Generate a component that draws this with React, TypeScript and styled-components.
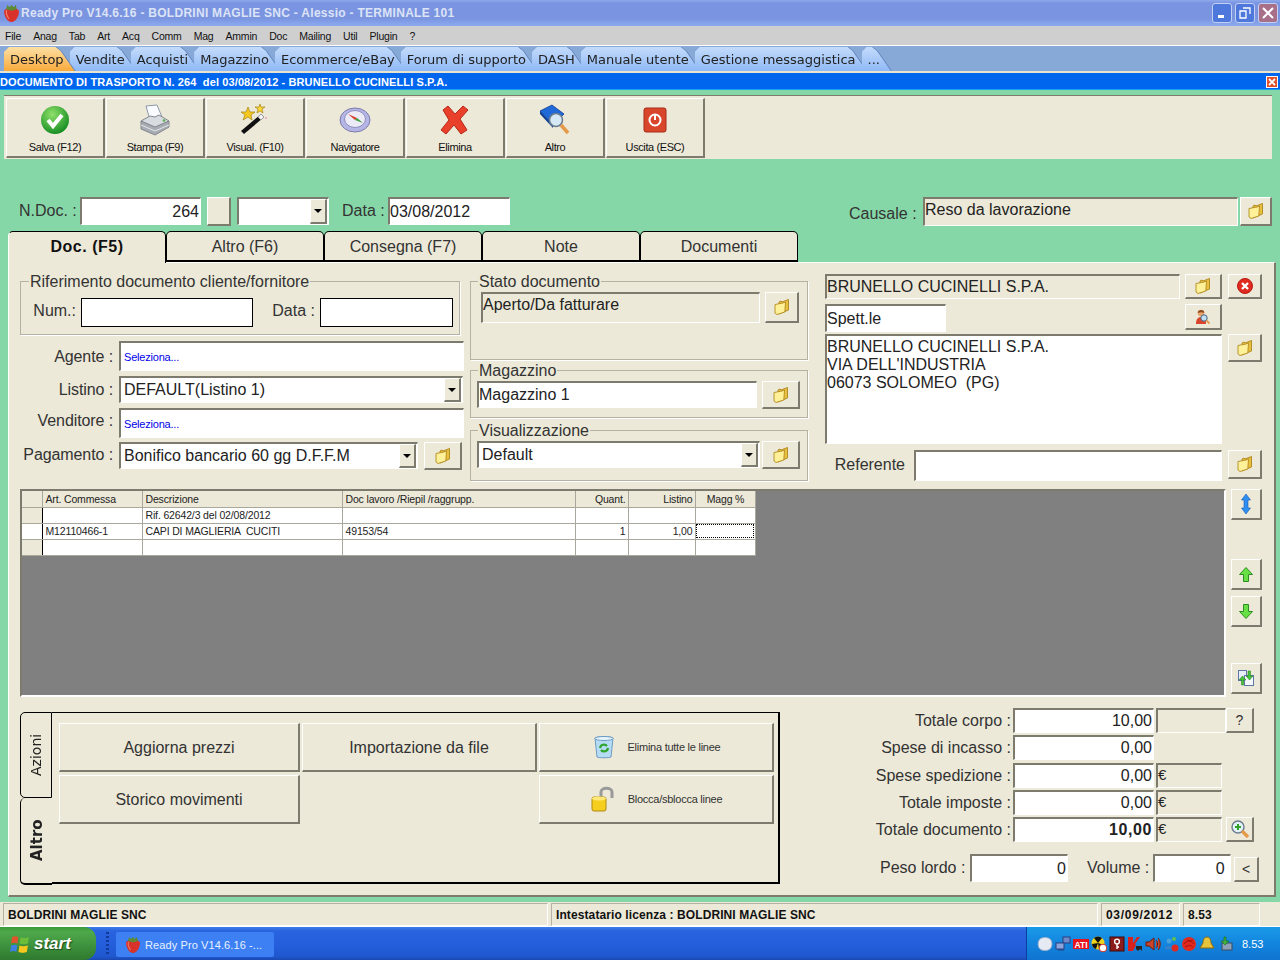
import { ReactNode } from "react";
import styled, { createGlobalStyle, css } from "styled-components";

const GlobalStyle = createGlobalStyle`
  html, body {
    margin: 0;
    padding: 0;
    background: #86d7a7;
    overflow: hidden;
  }
  * {
    box-sizing: border-box;
  }
`;

const BEIGE = "#ece9d8";
const SANS = `"Liberation Sans", Arial, sans-serif`;
const WIDE = `"DejaVu Sans", Verdana, sans-serif`;

const raised = css`
  border-style: solid;
  border-width: 1px 2px 2px 1px;
  border-color: #fff #7d7b6e #7d7b6e #fff;
  background: ${BEIGE};
`;

const sunken = css`
  border-style: solid;
  border-width: 2px 1px 1px 2px;
  border-color: #7d7b6e #fff #fff #7d7b6e;
`;

/* ---------- icons ---------- */

const Strawberry = ({ size = 16 }: { size?: number }) => (
  <svg width={size} height={size} viewBox="0 0 16 16">
    <path d="M1 6c0-2 3-3 7-3s7 1 7 3c0 4-3 10-7 10S1 10 1 6z" fill="#d8322a" />
    <path d="M3.500 5c-1 2 0 5 2 8" stroke="#f28a70" strokeWidth="1" fill="none" />
    <path d="M3 4l1-4 2 2 2-2 2 2 2-2 1 4-5 1.500z" fill="#5d8a32" />
  </svg>
);

const Folder = () => (
  <svg width="16" height="16" viewBox="0 0 16 16">
    <path d="M5 3l2-1 1 1 6.500-2.500v10.500L5 15z" fill="#e8c040" stroke="#ad851c" strokeWidth=".9" />
    <path d="M1 5.500l8-1.500 2.500-1-.7 10-7.800 2.500-2-1.500z" fill="#fff09a" stroke="#b38a1e" strokeWidth=".9" />
  </svg>
);

const Check = () => (
  <svg width="30" height="30" viewBox="0 0 30 30">
    <defs>
      <radialGradient id="chk" cx="40%" cy="30%" r="75%">
        <stop offset="0" stopColor="#8fe06a" />
        <stop offset="1" stopColor="#0f8a1e" />
      </radialGradient>
    </defs>
    <circle cx="15" cy="15" r="14" fill="url(#chk)" />
    <path d="M8 15l5 6 9-11" stroke="#fff" strokeWidth="4" fill="none" />
  </svg>
);

const Printer = () => (
  <svg width="32" height="32" viewBox="0 0 32 32">
    <path d="M7 2l11-1 5 12-12 3z" fill="#fafbfe" stroke="#8d98aa" />
    <path d="M2 17l9-5 5 1 4-2 10 6-14 7z" fill="#d8dbdf" stroke="#83888f" />
    <path d="M2 17l14 6 14-6v6l-14 8-14-6z" fill="#a7acb3" stroke="#83888f" />
    <path d="M2 21l14 6 14-6" fill="none" stroke="#e4e6ea" />
    <circle cx="25" cy="16.500" r="1.300" fill="#56b04a" />
  </svg>
);

const Wand = () => (
  <svg width="32" height="32" viewBox="0 0 32 32">
    <path d="M5 30l-3-3L21 11l3 3z" fill="#111" />
    <path d="M19 13l3-3 3 3-3 3z" fill="#f2f2f2" stroke="#999" />
    <path d="M9 3l2 5 5 0-4 3 1 5-4-3-5 3 2-5-4-3 5 0z" fill="#f4c81e" stroke="#a78414" strokeWidth=".7" />
    <path d="M21 0l1 3 4 0-3 2 1 4-3-2-3 2 1-4-3-2 4 0z" fill="#f8d836" stroke="#a78414" strokeWidth=".7" />
    <circle cx="27" cy="14" r="1" fill="#e9a0c0" />
  </svg>
);

const Compass = () => (
  <svg width="32" height="26" viewBox="0 0 32 26">
    <ellipse cx="16" cy="13" rx="15" ry="12" fill="#b5b5e6" stroke="#7c7cab" />
    <ellipse cx="16" cy="12" rx="10.500" ry="8.500" fill="#eceaf6" stroke="#9090bf" />
    <path d="M9 7l9 4-2 2z" fill="#d8402c" />
    <path d="M18 11l6 5-8-3z" fill="#3c9a3e" />
  </svg>
);

const RedCross = () => (
  <svg width="30" height="30" viewBox="0 0 30 30">
    <path
      d="M3 5l5-4 7 8 8-8 5 4-8 9 7 11-6 4-7-9-8 9-5-4 8-10z"
      fill="#e8402a"
      stroke="#b5281a"
    />
  </svg>
);

const BookSearch = () => (
  <svg width="32" height="32" viewBox="0 0 32 32">
    <path d="M1 7L13 1l12 9-11 11z" fill="#1f6ad8" stroke="#0f3f90" strokeWidth=".8" />
    <path d="M1 7l13 14v3L1 10z" fill="#0f3f90" />
    <circle cx="17" cy="16" r="6.500" fill="#d5e8f6" stroke="#6c7c8e" strokeWidth="1.500" />
    <path d="M22 21l7 8" stroke="#e49a48" strokeWidth="3.500" />
  </svg>
);

const ExitIcon = () => (
  <svg width="24" height="28" viewBox="0 0 24 28">
    <rect x="1" y="2" width="22" height="24" rx="2" fill="#d9452a" stroke="#a52c18" />
    <circle cx="12" cy="14" r="5.500" fill="none" stroke="#fff" strokeWidth="2" />
    <path d="M12 8v6" stroke="#fff" strokeWidth="2" />
  </svg>
);

const RedCircle = () => (
  <svg width="16" height="16" viewBox="0 0 16 16">
    <circle cx="8" cy="8" r="7.500" fill="#e02a20" stroke="#b81810" />
    <path d="M5 5l6 6M11 5l-6 6" stroke="#fff" strokeWidth="2.400" />
  </svg>
);

const PersonSearch = () => (
  <svg width="16" height="16" viewBox="0 0 16 16">
    <path d="M1 15c0-5 2-7 5-7s5 2 5 7z" fill="#d8452c" />
    <circle cx="6" cy="4" r="3.300" fill="#eaa36c" />
    <path d="M2.700 4c0-4 7-4 6.600 0-2-1-4-1-6.600 0z" fill="#8a4a1e" />
    <circle cx="9" cy="9" r="3.200" fill="#bfe0f8" stroke="#4a6078" />
    <path d="M11.500 11.500l3 3" stroke="#e49a48" strokeWidth="1.800" />
  </svg>
);

const BlueUpDown = () => (
  <svg width="10" height="20" viewBox="0 0 10 20">
    <path d="M5 0l4.500 6H7v8h2.500L5 20 .5 14H3V6H.5z" fill="#2f8ff0" stroke="#1458b0" strokeWidth=".6" />
  </svg>
);

const GreenArrow = ({ down }: { down?: boolean }) => (
  <svg width="14" height="15" viewBox="0 0 14 15">
    <path
      d={down ? "M4.500 .5h5v7h4L7 14.500 .5 7.500h4z" : "M7 .5l6.500 7h-4v7h-5v-7h-4z"}
      fill="#66e044"
      stroke="#2d8e22"
    />
  </svg>
);

const SwapDocs = () => (
  <svg width="16" height="16" viewBox="0 0 16 16">
    <rect x=".5" y=".5" width="8" height="10" fill="#e8eef8" stroke="#5f77a8" />
    <rect x="6.500" y="5.500" width="9" height="10" fill="#f4f7fc" stroke="#5f77a8" />
    <path d="M3.500 15V10H1l3.500-4L8 10H5.500v5z" fill="#45c03a" stroke="#207a1a" strokeWidth=".5" />
    <path d="M10 1v5H8l3.500 4L15 6h-2.500V1z" fill="#45c03a" stroke="#207a1a" strokeWidth=".5" />
  </svg>
);

const RecycleBin = () => (
  <svg width="24" height="24" viewBox="0 0 24 24">
    <path d="M3 3c3-2 15-2 18 0l-2 19c-2 1-12 1-14 0z" fill="#b5dcf5" stroke="#6c9cc4" />
    <ellipse cx="12" cy="3.500" rx="9" ry="2" fill="#e7f4fc" stroke="#6c9cc4" />
    <path d="M8 13a4 4 0 0 1 7-2M16 13a4 4 0 0 1-7 2" stroke="#2ea52a" strokeWidth="2.200" fill="none" />
  </svg>
);

const OpenLock = () => (
  <svg width="26" height="26" viewBox="0 0 26 26">
    <path d="M11 13V6c0-5 11-5 11 0v6" fill="none" stroke="#9a9a9a" strokeWidth="3" />
    <rect x="2" y="11" width="14" height="14" rx="2" fill="#f6cf1e" stroke="#b08a10" />
    <ellipse cx="9" cy="12.500" rx="7" ry="2" fill="#ffe878" />
  </svg>
);

const ZoomPlus = () => (
  <svg width="20" height="20" viewBox="0 0 20 20">
    <circle cx="8" cy="8" r="6" fill="#e3f2fa" stroke="#6c7c8e" strokeWidth="1.400" />
    <path d="M8 5v6M5 8h6" stroke="#2ea52a" strokeWidth="2" />
    <path d="M12 12l6 6" stroke="#e49a48" strokeWidth="3.200" />
  </svg>
);

const WinFlag = () => (
  <svg width="20" height="20" viewBox="0 0 19 19">
    <path d="M2 3c2-1 4-1 6 0l-1 6c-2-1-4-1-6 0z" fill="#e2542c" />
    <path d="M10 3c2 1 4 1 8 0l-1 6c-2 1-6 1-8 0z" fill="#6cbe3a" />
    <path d="M1 11c2-1 4-1 6 0l-1 6c-2-1-4-1-6 0z" fill="#3c80e0" />
    <path d="M9 11c2 1 4 1 8 0l-1 6c-2 1-6 1-8 0z" fill="#f6c81e" />
  </svg>
);

const trayIcons: ReactNode[] = [
  <path key="a" d="M3 3c3-2 7-2 10 0 3 3 2 8 0 10-3 2-7 2-10 0-3-3-2-8 0-10z" fill="#e6eaf2" stroke="#9eb0cc" />,
  <g key="b">
    <rect x="8" y="1" width="7" height="6" fill="#7088c8" stroke="#2a3e80" />
    <rect x="1" y="7" width="8" height="6" fill="#8ea4dc" stroke="#2a3e80" />
    <path d="M3 14h6" stroke="#2a3e80" />
  </g>,
  <g key="c">
    <rect x="0" y="3" width="16" height="10" fill="#e8141c" />
    <text x="8" y="11.500" fontFamily={SANS} fontWeight="700" fontSize="8.500" fill="#fff" textAnchor="middle">ATI</text>
  </g>,
  <g key="d">
    <circle cx="7" cy="7" r="6.500" fill="#f2d41c" />
    <path d="M7 7L3 2a6 6 0 0 1 8 0zM7 7l6 2a6 6 0 0 1-5 4zM7 7l-2 6a6 6 0 0 1-4-5z" fill="#111" />
    <circle cx="12" cy="12" r="3.800" fill="#fff" stroke="#d8301c" />
  </g>,
  <g key="e">
    <rect x="1" y="1" width="14" height="14" fill="#8a1c1c" stroke="#3e0808" />
    <circle cx="8" cy="5.500" r="2.400" fill="none" stroke="#fff" strokeWidth="1.400" />
    <path d="M8 8v5M8 11h2" stroke="#fff" strokeWidth="1.400" />
  </g>,
  <g key="f">
    <path d="M1 1h5v6l4-6h3l-5 7 1 1-3 6H1z" fill="#d8201c" />
    <path d="M9 10l6 0v5l-2-2-2 2-2-2z" fill="#222" />
  </g>,
  <path key="g" d="M1 6h3l5-4v12L4 10H1zM11 4c2 2 2 6 0 8M13 2c3 3 3 9 0 12" fill="#c8442c" stroke="#6a1c10" />,
  <g key="h">
    <circle cx="6" cy="5" r="2.500" fill="#4aa0d8" />
    <circle cx="11" cy="3" r="2" fill="#60c050" />
    <path d="M2 13c0-4 7-4 7 0z" fill="#3c80c8" />
    <circle cx="12" cy="12" r="3.500" fill="#e02a20" />
  </g>,
  <g key="i">
    <circle cx="8" cy="8" r="7" fill="#e02a20" />
    <path d="M3 8c3-4 7-4 10 0M4 11c3-2 6-2 8 0M6 4c2 1 4 1 6 0" stroke="#a81008" fill="none" />
  </g>,
  <path key="j" d="M8 1c3 0 4 3 4 6l3 5H1l3-5c0-3 1-6 4-6z" fill="#e8c43c" stroke="#8a6c10" />,
  <g key="k">
    <rect x="5" y="7" width="10" height="7" fill="#8ea0b8" stroke="#3a4a60" />
    <path d="M7 1v4H4l4 4 4-4H9V1z" fill="#40b040" stroke="#1a6a1a" strokeWidth=".6" />
  </g>,
];

/* ---------- window chrome ---------- */

const Screen = styled.div`
  width: 1280px;
  height: 960px;
  display: flex;
  flex-direction: column;
  overflow: hidden;
  font-family: ${SANS};
  color: #111;
`;

const TitleBar = styled.div`
  height: 26px;
  flex: none;
  display: flex;
  align-items: center;
  padding: 0 2px 0 3px;
  background: linear-gradient(#8ea9ea 0, #7a94e2 12%, #7a94e0 70%, #8caaf0 100%);
`;

const TitleText = styled.span`
  margin-left: 1px;
  flex: 1;
  font-size: 12px;
  font-weight: 700;
  letter-spacing: 0.28px;
  color: #dce3f6;
`;

const WinButton = styled.div<{ $close?: boolean }>`
  width: 20px;
  height: 20px;
  margin-left: 3px;
  display: flex;
  align-items: center;
  justify-content: center;
  border-radius: 3px;
  border: 1px solid #c3d0f2;
  background: ${(p) => (p.$close ? "#a86f88" : "#4e78dc")};
`;

const MenuBar = styled.div`
  height: 20px;
  flex: none;
  display: flex;
  align-items: center;
  gap: 12px;
  padding-left: 5px;
  font-size: 10.500px;
  letter-spacing: -0.2px;
  background: #cfcfcf;
  border-bottom: 1px solid #fff;
`;

const ModuleStrip = styled.div`
  height: 25px;
  flex: none;
  display: flex;
  align-items: flex-end;
  padding-left: 4px;
  background: #87a9d8;
`;

const ModuleTab = styled.div<{ $active?: boolean }>`
  position: relative;
  height: 24px;
  padding: 5px 11px 0 6px;
  margin-right: -5px;
  font-family: ${WIDE};
  font-size: 13px;
  color: #222;
  white-space: nowrap;
  z-index: ${(p) => (p.$active ? 2 : 1)};
  filter: drop-shadow(1px 0 0 #5f82ba);

  &::before {
    content: "";
    position: absolute;
    inset: 0;
    z-index: -1;
    clip-path: polygon(0 100%, 0 5px, 5px 0, calc(100% - 19px) 0, calc(100% - 14px) 4px, 100% 100%);
    background: ${(p) =>
      p.$active
        ? "linear-gradient(#fde0a4, #f9aa3c)"
        : "linear-gradient(#c4dbfb, #8fb9f6)"};
  }
`;

const DocBar = styled.div`
  height: 19px;
  flex: none;
  display: flex;
  align-items: center;
  justify-content: space-between;
  padding: 1px 2px 0 0;
  border-top: 2px solid #e8e4d0;
  border-bottom: 1px solid #18a0f0;
  background: #0066ee;
  color: #fff;
  font-size: 11px;
  font-weight: 700;
  letter-spacing: 0.11px;
  white-space: pre;
`;

const DocClose = styled.div`
  width: 12px;
  height: 12px;
  display: flex;
  align-items: center;
  justify-content: center;
  border: 1px solid #fff;
  background: #e2502a;
`;

const Workspace = styled.div`
  flex: 1;
  display: flex;
  flex-direction: column;
  background: #86d7a7;
  padding-top: 5px;
`;

/* ---------- toolbar ---------- */

const Toolbar = styled.div`
  width: 1268px;
  height: 64px;
  margin-left: 4px;
  flex: none;
  display: flex;
  gap: 1px;
  padding: 2px 0 0 2px;
  border-top: 1px solid #7d7b6e;
  background: ${BEIGE};
`;

const ToolButton = styled.div`
  ${raised}
  width: 99px;
  height: 60px;
  display: flex;
  flex-direction: column;
  align-items: center;
  font-size: 11px;
  letter-spacing: -0.4px;
`;

const ToolIcon = styled.div`
  height: 42px;
  display: flex;
  align-items: center;
  justify-content: center;
`;

/* ---------- head row ---------- */

const HeadRow = styled.div`
  height: 30px;
  margin-top: 37px;
  padding-left: 19px;
  flex: none;
  display: flex;
  align-items: center;
  font-size: 16px;
  color: #333;
`;

const HeadLabel = styled.span<{ $w: number; $ml?: number; $low?: boolean }>`
  width: ${(p) => p.$w}px;
  margin-left: ${(p) => p.$ml ?? 0}px;
  padding-top: ${(p) => (p.$low ? 6 : 0)}px;
  white-space: nowrap;
`;

const Field = styled.div<{
  $w?: number;
  $h: number;
  $ml?: number;
  $mt?: number;
  $beige?: boolean;
  $right?: boolean;
  $bold?: boolean;
  $top?: boolean;
}>`
  ${sunken}
  width: ${(p) => (p.$w ? `${p.$w}px` : "auto")};
  height: ${(p) => p.$h}px;
  margin-left: ${(p) => p.$ml ?? 0}px;
  margin-top: ${(p) => p.$mt ?? 0}px;
  flex: ${(p) => (p.$w ? "none" : 1)};
  display: flex;
  align-items: ${(p) => (p.$top ? "flex-start" : "center")};
  justify-content: ${(p) => (p.$right ? "flex-end" : "flex-start")};
  padding: ${(p) => (p.$top ? "2px 0 0 0" : "0 1px 0 0")};
  background: ${(p) => (p.$beige ? BEIGE : "#fff")};
  font-size: 16px;
  font-weight: ${(p) => (p.$bold ? 700 : 400)};
  letter-spacing: ${(p) => (p.$bold ? 0.6 : 0)}px;
  color: #222;
  white-space: pre;
  overflow: hidden;
`;

const SquareButton = styled.div<{ $w: number; $h: number; $ml?: number; $mt?: number }>`
  ${raised}
  width: ${(p) => p.$w}px;
  height: ${(p) => p.$h}px;
  margin-left: ${(p) => p.$ml ?? 0}px;
  margin-top: ${(p) => p.$mt ?? 0}px;
  flex: none;
  display: flex;
  align-items: center;
  justify-content: center;
  font-size: 14px;
  color: #333;
`;

const ComboArrow = styled.div<{ $w?: number }>`
  ${raised}
  width: ${(p) => p.$w ?? 17}px;
  height: 100%;
  margin-left: auto;
  flex: none;
  display: flex;
  align-items: center;
  justify-content: center;

  &::after {
    content: "";
    border-style: solid;
    border-width: 4px 4px 0;
    border-color: #000 transparent transparent;
  }
`;

/* ---------- document tabs ---------- */

const TabRow = styled.div`
  height: 31px;
  margin: 5px 0 0 8px;
  flex: none;
  display: flex;
  position: relative;
  z-index: 1;
`;

const DocTab = styled.div<{ $active?: boolean }>`
  width: 158px;
  height: ${(p) => (p.$active ? 32 : 31)}px;
  display: flex;
  align-items: center;
  justify-content: center;
  padding: ${(p) => (p.$active ? "0 0 2px" : "1px 0 0")};
  border: 1px solid #000;
  border-bottom: ${(p) => (p.$active ? "none" : "2px solid #000")};
  border-left-color: ${(p) => (p.$active ? "#fff" : "#000")};
  border-radius: 5px 5px 0 0;
  background: ${BEIGE};
  font-size: 16px;
  font-weight: ${(p) => (p.$active ? 700 : 400)};
  letter-spacing: ${(p) => (p.$active ? 0.5 : 0)}px;
  color: ${(p) => (p.$active ? "#111" : "#333")};
`;

const Panel = styled.div`
  width: 1268px;
  height: 635px;
  margin-left: 8px;
  flex: none;
  padding: 9px 0 0 11px;
  border-style: solid;
  border-width: 1px 2px 2px 1px;
  border-color: #fff #7d7b6e #7d7b6e #fff;
  background: ${BEIGE};
`;

const TopRow = styled.div`
  display: flex;
  align-items: flex-start;
`;

const Column = styled.div<{ $w: number; $ml?: number; $mt?: number }>`
  width: ${(p) => p.$w}px;
  margin-left: ${(p) => p.$ml ?? 0}px;
  margin-top: ${(p) => p.$mt ?? 0}px;
  flex: none;
  display: flex;
  flex-direction: column;
`;

const Group = styled.fieldset<{ $w: number; $h: number; $mt?: number; $pt?: number; $lm?: number }>`
  width: ${(p) => p.$w}px;
  height: ${(p) => p.$h}px;
  margin: ${(p) => p.$mt ?? 0}px 0 0;
  padding: ${(p) => p.$pt ?? 1}px 0 0;
  min-width: 0;
  border: 1px solid #b5b2a3;
  box-shadow: 1px 1px 0 #fff;

  legend {
    margin-left: ${(p) => p.$lm ?? 7}px;
    padding: 1px 1px 0;
    line-height: 18px;
    font-size: 16px;
    color: #333;
  }
`;

const GroupRow = styled.div<{ $gap?: number; $ml?: number }>`
  display: flex;
  align-items: flex-start;
  gap: ${(p) => p.$gap ?? 0}px;
  margin-left: ${(p) => p.$ml ?? 0}px;
`;

const RefLabel = styled.span<{ $w: number; $lh?: number }>`
  width: ${(p) => p.$w}px;
  flex: none;
  padding-right: 5px;
  text-align: right;
  font-size: 16px;
  line-height: ${(p) => p.$lh ?? 30}px;
  color: #333;
`;

const BlackInput = styled.div<{ $w: number }>`
  width: ${(p) => p.$w}px;
  height: 29px;
  flex: none;
  border: 1px solid #000;
  background: #fff;
`;

const FormRow = styled.div<{ $mt: number }>`
  display: flex;
  align-items: flex-start;
  margin-top: ${(p) => p.$mt}px;
`;

const FormLabel = styled.span<{ $pt: number }>`
  width: 99px;
  flex: none;
  padding: ${(p) => p.$pt}px 6px 0 0;
  text-align: right;
  font-size: 16px;
  letter-spacing: -0.1px;
  color: #333;
  white-space: nowrap;
`;

const LinkText = styled.span`
  margin: 1px 0 0 3px;
  font-size: 11px;
  letter-spacing: -0.2px;
  color: #0000e8;
`;

const ComboText = styled.span`
  padding-left: 3px;
  font-size: 16px;
`;

const AddressLine = styled.div`
  font-size: 16px;
  line-height: 18px;
`;

/* ---------- lines grid ---------- */

const GridRow = styled.div`
  display: flex;
  gap: 5px;
  margin-top: 8px;
`;

const GridArea = styled.div`
  ${sunken}
  width: 1206px;
  height: 208px;
  flex: none;
  background: #808080;
  border-right-width: 2px;
  border-bottom-width: 2px;
`;

const LinesTable = styled.table`
  width: 733px;
  border-collapse: collapse;
  table-layout: fixed;
  background: #fff;
  border-right: 1px solid #000;
  border-bottom: 1px solid #000;
  font-size: 10.500px;
  letter-spacing: -0.15px;
  color: #222;

  td,
  th {
    height: 16px;
    padding: 0 2px 0 3px;
    border-right: 1px solid #aaa89c;
    border-bottom: 1px solid #aaa89c;
    font-weight: 400;
    text-align: left;
    white-space: pre;
    overflow: hidden;
  }

  th {
    background: ${BEIGE};
  }
`;

const RowHead = styled.td<{ $current?: boolean }>`
  && {
    background: ${(p) => (p.$current ? "#fff" : BEIGE)};
    border-right: 1px solid #000;
  }
`;

const NumCell = styled.td`
  && {
    text-align: right;
  }
`;

const NumHead = styled.th<{ $center?: boolean }>`
  && {
    text-align: ${(p) => (p.$center ? "center" : "right")};
  }
`;

const FocusCell = styled.td`
  && {
    outline: 1px dotted #000;
    outline-offset: -2px;
  }
`;

const SideColumn = styled.div`
  display: flex;
  flex-direction: column;
`;

/* ---------- bottom row ---------- */

const BottomRow = styled.div`
  display: flex;
  align-items: flex-start;
  margin-top: 11px;
`;

const ActionBox = styled.div`
  width: 760px;
  height: 173px;
  margin-top: 4px;
  flex: none;
  display: flex;
`;

const SideTabs = styled.div`
  width: 32px;
  flex: none;
  display: flex;
  flex-direction: column;
`;

/* rotated 180deg, so left/right and top/bottom borders are swapped */
const SideTab = styled.div<{ $active?: boolean }>`
  height: ${(p) => (p.$active ? 87 : 86)}px;
  display: flex;
  align-items: center;
  justify-content: center;
  writing-mode: vertical-rl;
  transform: rotate(180deg);
  font-family: ${WIDE};
  font-size: ${(p) => (p.$active ? 15 : 14)}px;
  font-weight: ${(p) => (p.$active ? 700 : 400)};
  color: #222;
  border-style: solid;
  border-color: #000;
  border-width: ${(p) => (p.$active ? "2px 1px 0 0" : "1px")};
  border-radius: 0 5px 5px 0;
  background: ${BEIGE};
`;

const ActionFrame = styled.div`
  flex: 1;
  height: 172px;
  padding: 10px 0 0 7px;
  border-top: 1px solid #000;
  border-right: 2px solid #000;
  border-bottom: 2px solid #000;
  display: grid;
  grid-template-columns: 241px 235px 235px;
  grid-auto-rows: 49px;
  column-gap: 2px;
  row-gap: 3px;
  align-content: start;
`;

const ActionButton = styled.div<{ $small?: boolean }>`
  ${raised}
  display: flex;
  align-items: center;
  justify-content: center;
  gap: 12px;
  padding-top: ${(p) => (p.$small ? 0 : 2)}px;
  font-size: ${(p) => (p.$small ? 11 : 16)}px;
  letter-spacing: ${(p) => (p.$small ? -0.25 : 0)}px;
  color: #333;
`;

const Totals = styled.div`
  width: 400px;
  margin-left: 80px;
  flex: none;
`;

const TotalsGrid = styled.div`
  display: grid;
  grid-template-columns: 153px 141px 72px 30px;
  grid-auto-rows: 25px;
  row-gap: 2.250px;
  font-size: 16px;
  color: #333;
`;

const TotalLabel = styled.span`
  padding-right: 2px;
  text-align: right;
  line-height: 25px;
  white-space: nowrap;
`;

const Currency = styled.div<{ $narrow?: boolean }>`
  ${sunken}
  margin-left: 2px;
  width: ${(p) => (p.$narrow ? 66 : 70)}px;
  line-height: 20px;
  font-size: 15px;
  background: ${BEIGE};
  color: #222;
`;

const WeightRow = styled.div`
  display: flex;
  align-items: flex-start;
  margin: 12px 0 0 20px;
  font-size: 16px;
  color: #333;
`;

const WeightLabel = styled.span<{ $w: number; $pl?: number }>`
  width: ${(p) => p.$w}px;
  flex: none;
  padding-left: ${(p) => p.$pl ?? 0}px;
  line-height: 28px;
  white-space: nowrap;
`;

/* ---------- status + taskbar ---------- */

const StatusBar = styled.div`
  height: 25px;
  margin-top: 5px;
  flex: none;
  display: flex;
  padding: 1px 0 0 3px;
  gap: 3px;
  background: ${BEIGE};
  border-bottom: 1px solid #fff;
`;

const StatusCell = styled.div<{ $w: number; $wide?: boolean }>`
  width: ${(p) => p.$w}px;
  display: flex;
  align-items: center;
  padding-left: 4px;
  border-style: solid;
  border-width: 1px;
  border-color: #b5b2a3 #fff #fff #b5b2a3;
  font-size: 12px;
  font-weight: 700;
  letter-spacing: ${(p) => (p.$wide ? 0.7 : 0.1)}px;
`;

const TaskBar = styled.div`
  height: 33px;
  flex: none;
  display: flex;
  align-items: stretch;
  background: linear-gradient(#3f7eea 0, #2a63de 12%, #245edb 55%, #2057cf 90%, #1a48b0 100%);
`;

const StartButton = styled.div`
  width: 96px;
  display: flex;
  align-items: center;
  gap: 4px;
  padding: 1px 0 0 10px;
  border-radius: 0 12px 12px 0;
  background: linear-gradient(#3a9a3a 0, #4fa94a 15%, #3c8f3c 60%, #2f7a2f 100%);
  font-size: 17px;
  font-weight: 700;
  font-style: italic;
  color: #fff;
  text-shadow: 1px 1px 1px #1c4a1c;
`;

const Grip = styled.div`
  width: 3px;
  height: 24px;
  margin: 5px 7px 0 10px;
  flex: none;
  background: repeating-linear-gradient(#123a9c 0 2px, transparent 2px 4px);
`;

const TaskItem = styled.div`
  width: 158px;
  height: 25px;
  margin-top: 5px;
  display: flex;
  align-items: center;
  gap: 4px;
  padding-left: 9px;
  border-radius: 2px;
  background: #3c80f3;
  color: #e8f0ff;
  font-size: 11px;
  letter-spacing: 0.1px;
  white-space: nowrap;
`;

const Tray = styled.div`
  margin-left: auto;
  width: 254px;
  display: flex;
  align-items: center;
  gap: 2px;
  padding-left: 10px;
  border-left: 1px solid #0d3f9e;
  background: linear-gradient(#1a9ae8 0, #1285de 50%, #0f74d0 100%);
`;

const TrayClock = styled.span`
  margin-left: 7px;
  font-size: 11px;
  color: #fff;
`;

const Tool = ({ icon, label }: { icon: ReactNode; label: string }) => (
  <ToolButton>
    <ToolIcon>{icon}</ToolIcon>
    {label}
  </ToolButton>
);

const FolderButton = ({ w, h, ml, mt }: { w: number; h: number; ml?: number; mt?: number }) => (
  <SquareButton $w={w} $h={h} $ml={ml} $mt={mt}>
    <Folder />
  </SquareButton>
);

const menus = ["File", "Anag", "Tab", "Art", "Acq", "Comm", "Mag", "Ammin", "Doc", "Mailing", "Util", "Plugin", "?"];
const modules = [
  "Desktop",
  "Vendite",
  "Acquisti",
  "Magazzino",
  "Ecommerce/eBay",
  "Forum di supporto",
  "DASH",
  "Manuale utente",
  "Gestione messaggistica",
  "...",
];

export default function App() {
  return (
    <Screen>
      <GlobalStyle />
      <TitleBar>
        <Strawberry size={17} />
        <TitleText>Ready Pro V14.6.16 - BOLDRINI MAGLIE SNC - Alessio - TERMINALE 101</TitleText>
        <WinButton>
          <svg width="12" height="12" viewBox="0 0 12 12">
            <rect x="2" y="8" width="6" height="3" fill="#fff" />
          </svg>
        </WinButton>
        <WinButton>
          <svg width="12" height="12" viewBox="0 0 12 12">
            <path d="M4 1h7v6M1 4h6v7H1z M1 4h6" fill="none" stroke="#fff" strokeWidth="1.300" />
          </svg>
        </WinButton>
        <WinButton $close>
          <svg width="12" height="12" viewBox="0 0 12 12">
            <path d="M1 1l10 10M11 1L1 11" stroke="#fff" strokeWidth="2" />
          </svg>
        </WinButton>
      </TitleBar>

      <MenuBar>
        {menus.map((m) => (
          <span key={m}>{m}</span>
        ))}
      </MenuBar>

      <ModuleStrip>
        {modules.map((m, i) => (
          <ModuleTab key={m} $active={i === 0}>
            {m}
          </ModuleTab>
        ))}
      </ModuleStrip>

      <DocBar>
        {"DOCUMENTO DI TRASPORTO N. 264  del 03/08/2012 - BRUNELLO CUCINELLI S.P.A."}
        <DocClose>
          <svg width="10" height="10" viewBox="0 0 10 10">
            <path d="M2 2l6 6M8 2L2 8" stroke="#fff" strokeWidth="1.800" />
          </svg>
        </DocClose>
      </DocBar>

      <Workspace>
        <Toolbar>
          <Tool icon={<Check />} label="Salva (F12)" />
          <Tool icon={<Printer />} label="Stampa (F9)" />
          <Tool icon={<Wand />} label="Visual. (F10)" />
          <Tool icon={<Compass />} label="Navigatore" />
          <Tool icon={<RedCross />} label="Elimina" />
          <Tool icon={<BookSearch />} label="Altro" />
          <Tool icon={<ExitIcon />} label="Uscita (ESC)" />
        </Toolbar>

        <HeadRow>
          <HeadLabel $w={61}>N.Doc. :</HeadLabel>
          <Field $w={121} $h={28} $right>
            264
          </Field>
          <SquareButton $w={24} $h={29} $ml={6} />
          <Field $w={92} $h={28} $ml={6}>
            <ComboArrow />
          </Field>
          <HeadLabel $w={46} $ml={13}>
            Data :
          </HeadLabel>
          <Field $w={122} $h={28}>
            03/08/2012
          </Field>
          <HeadLabel $w={74} $ml={339} $low>
            Causale :
          </HeadLabel>
          <Field $w={315} $h={29} $beige $top>
            Reso da lavorazione
          </Field>
          <FolderButton w={32} h={29} ml={2} />
        </HeadRow>

        <TabRow>
          <DocTab $active>Doc. (F5)</DocTab>
          <DocTab>Altro (F6)</DocTab>
          <DocTab>Consegna (F7)</DocTab>
          <DocTab>Note</DocTab>
          <DocTab>Documenti</DocTab>
        </TabRow>

        <Panel>
          <TopRow>
            <Column $w={444}>
              <Group $w={440} $h={63} $pt={7} $lm={8}>
                <legend>Riferimento documento cliente/fornitore</legend>
                <GroupRow>
                  <RefLabel $w={60} $lh={26}>
                    Num.:
                  </RefLabel>
                  <BlackInput $w={172} />
                  <RefLabel $w={67} $lh={26}>
                    Data :
                  </RefLabel>
                  <BlackInput $w={133} />
                </GroupRow>
              </Group>
              <FormRow $mt={6}>
                <FormLabel $pt={7}>Agente :</FormLabel>
                <Field $w={345} $h={30}>
                  <LinkText>Seleziona...</LinkText>
                </Field>
              </FormRow>
              <FormRow $mt={5}>
                <FormLabel $pt={5}>Listino :</FormLabel>
                <Field $w={344} $h={27}>
                  <ComboText>DEFAULT(Listino 1)</ComboText>
                  <ComboArrow />
                </Field>
              </FormRow>
              <FormRow $mt={5}>
                <FormLabel $pt={4}>Venditore :</FormLabel>
                <Field $w={345} $h={30}>
                  <LinkText>Seleziona...</LinkText>
                </Field>
              </FormRow>
              <FormRow $mt={4}>
                <FormLabel $pt={4}>Pagamento :</FormLabel>
                <Field $w={299} $h={27}>
                  <ComboText>Bonifico bancario 60 gg D.F.F.M</ComboText>
                  <ComboArrow />
                </Field>
                <FolderButton w={38} h={28} ml={6} />
              </FormRow>
            </Column>

            <Column $w={338} $ml={6}>
              <Group $w={338} $h={88}>
                <legend>Stato documento</legend>
                <GroupRow $gap={5} $ml={10}>
                  <Field $w={279} $h={31} $beige $top>
                    Aperto/Da fatturare
                  </Field>
                  <FolderButton w={34} h={31} />
                </GroupRow>
              </Group>
              <Group $w={338} $h={57} $mt={1}>
                <legend>Magazzino</legend>
                <GroupRow $gap={5} $ml={6}>
                  <Field $w={280} $h={27}>
                    Magazzino 1
                  </Field>
                  <FolderButton w={38} h={28} />
                </GroupRow>
              </Group>
              <Group $w={338} $h={60} $mt={3}>
                <legend>Visualizzazione</legend>
                <GroupRow $gap={2} $ml={6}>
                  <Field $w={283} $h={27}>
                    <ComboText>Default</ComboText>
                    <ComboArrow />
                  </Field>
                  <FolderButton w={38} h={28} />
                </GroupRow>
              </Group>
            </Column>

            <Column $w={438} $ml={17} $mt={2}>
              <FormRow $mt={0}>
                <Field $w={355} $h={25} $beige>
                  BRUNELLO CUCINELLI S.P.A.
                </Field>
                <FolderButton w={37} h={25} ml={5} />
                <SquareButton $w={34} $h={25} $ml={6}>
                  <RedCircle />
                </SquareButton>
              </FormRow>
              <FormRow $mt={5}>
                <Field $w={121} $h={28}>
                  Spett.le
                </Field>
                <SquareButton $w={37} $h={26} $ml={239}>
                  <PersonSearch />
                </SquareButton>
              </FormRow>
              <FormRow $mt={2}>
                <Field $w={397} $h={110} $top>
                  <div>
                    <AddressLine>BRUNELLO CUCINELLI S.P.A.</AddressLine>
                    <AddressLine>VIA DELL'INDUSTRIA</AddressLine>
                    <AddressLine>{"06073 SOLOMEO  (PG)"}</AddressLine>
                  </div>
                </Field>
                <FolderButton w={34} h={28} ml={6} />
              </FormRow>
              <FormRow $mt={6}>
                <RefLabel $w={85}>Referente</RefLabel>
                <Field $w={308} $h={31} $ml={4} />
                <FolderButton w={34} h={29} ml={6} />
              </FormRow>
            </Column>
          </TopRow>

          <GridRow>
            <GridArea>
              <LinesTable>
                <colgroup>
                  <col width="20" />
                  <col width="100" />
                  <col width="200" />
                  <col width="233" />
                  <col width="53" />
                  <col width="67" />
                  <col width="60" />
                </colgroup>
                <thead>
                  <tr>
                    <th />
                    <th>Art. Commessa</th>
                    <th>Descrizione</th>
                    <th>Doc lavoro /Riepil /raggrupp.</th>
                    <NumHead>Quant.</NumHead>
                    <NumHead>Listino</NumHead>
                    <NumHead $center>Magg %</NumHead>
                  </tr>
                </thead>
                <tbody>
                  <tr>
                    <RowHead />
                    <td />
                    <td>Rif. 62642/3 del 02/08/2012</td>
                    <td />
                    <td />
                    <td />
                    <td />
                  </tr>
                  <tr>
                    <RowHead $current />
                    <td>M12110466-1</td>
                    <td>{"CAPI DI MAGLIERIA  CUCITI"}</td>
                    <td>49153/54</td>
                    <NumCell>1</NumCell>
                    <NumCell>1,00</NumCell>
                    <FocusCell />
                  </tr>
                  <tr>
                    <RowHead />
                    <td />
                    <td />
                    <td />
                    <td />
                    <td />
                    <td />
                  </tr>
                </tbody>
              </LinesTable>
            </GridArea>
            <SideColumn>
              <SquareButton $w={31} $h={31}>
                <BlueUpDown />
              </SquareButton>
              <SquareButton $w={31} $h={31} $mt={39}>
                <GreenArrow />
              </SquareButton>
              <SquareButton $w={31} $h={31} $mt={6}>
                <GreenArrow down />
              </SquareButton>
              <SquareButton $w={31} $h={31} $mt={36}>
                <SwapDocs />
              </SquareButton>
            </SideColumn>
          </GridRow>

          <BottomRow>
            <ActionBox>
              <SideTabs>
                <SideTab>Azioni</SideTab>
                <SideTab $active>Altro</SideTab>
              </SideTabs>
              <ActionFrame>
                <ActionButton>Aggiorna prezzi</ActionButton>
                <ActionButton>Importazione da file</ActionButton>
                <ActionButton $small>
                  <RecycleBin />
                  Elimina tutte le linee
                </ActionButton>
                <ActionButton>Storico movimenti</ActionButton>
                <div />
                <ActionButton $small>
                  <OpenLock />
                  Blocca/sblocca linee
                </ActionButton>
              </ActionFrame>
            </ActionBox>

            <Totals>
              <TotalsGrid>
                <TotalLabel>Totale corpo :</TotalLabel>
                <Field $h={25} $right>
                  10,00
                </Field>
                <Currency />
                <SquareButton $w={28} $h={25}>
                  ?
                </SquareButton>

                <TotalLabel>Spese di incasso :</TotalLabel>
                <Field $h={25} $right>
                  0,00
                </Field>
                <div />
                <div />

                <TotalLabel>Spese spedizione :</TotalLabel>
                <Field $h={25} $right>
                  0,00
                </Field>
                <Currency $narrow>€</Currency>
                <div />

                <TotalLabel>Totale imposte :</TotalLabel>
                <Field $h={25} $right>
                  0,00
                </Field>
                <Currency $narrow>€</Currency>
                <div />

                <TotalLabel>Totale documento :</TotalLabel>
                <Field $h={25} $right $bold>
                  10,00
                </Field>
                <Currency $narrow>€</Currency>
                <SquareButton $w={28} $h={25}>
                  <ZoomPlus />
                </SquareButton>
              </TotalsGrid>

              <WeightRow>
                <WeightLabel $w={90}>Peso lordo :</WeightLabel>
                <Field $w={98} $h={28} $right>
                  0
                </Field>
                <WeightLabel $w={85} $pl={19}>
                  Volume :
                </WeightLabel>
                <Field $w={78} $h={28} $right>
                  {"0 "}
                </Field>
                <SquareButton $w={25} $h={25} $ml={3} $mt={3}>
                  &lt;
                </SquareButton>
              </WeightRow>
            </Totals>
          </BottomRow>
        </Panel>

        <StatusBar>
          <StatusCell $w={545}>BOLDRINI MAGLIE SNC</StatusCell>
          <StatusCell $w={547}>Intestatario licenza : BOLDRINI MAGLIE SNC</StatusCell>
          <StatusCell $w={79} $wide>
            03/09/2012
          </StatusCell>
          <StatusCell $w={77}>8.53</StatusCell>
        </StatusBar>
      </Workspace>

      <TaskBar>
        <StartButton>
          <WinFlag />
          start
        </StartButton>
        <Grip />
        <TaskItem>
          <Strawberry size={16} />
          Ready Pro V14.6.16 -...
        </TaskItem>
        <Tray>
          {trayIcons.map((icon, i) => (
            <svg key={i} width="16" height="16" viewBox="0 0 16 16">
              {icon}
            </svg>
          ))}
          <TrayClock>8.53</TrayClock>
        </Tray>
      </TaskBar>
    </Screen>
  );
}
